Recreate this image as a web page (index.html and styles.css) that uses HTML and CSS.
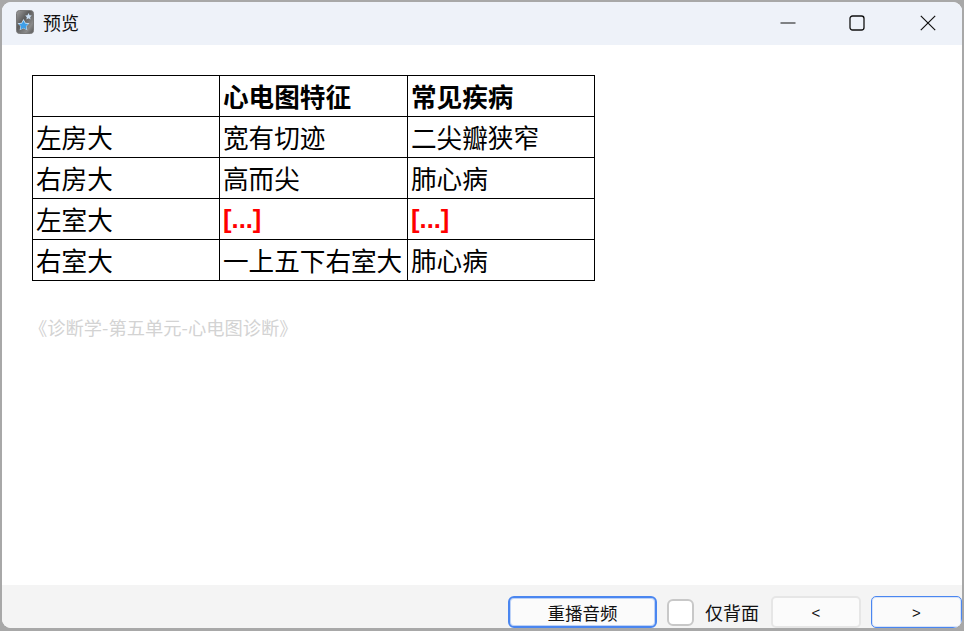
FILE: index.html
```html
<!DOCTYPE html>
<html lang="zh-CN">
<head>
<meta charset="utf-8">
<title>预览</title>
<link rel="stylesheet" href="styles.css">
</head>
<body>
<div class="window">
  <header class="titlebar">
    <svg class="app-icon" width="18" height="24" viewBox="0 0 18 24">
      <defs>
        <linearGradient id="g" x1="0" y1="0" x2="1" y2="1">
          <stop offset="0" stop-color="#a0a0a0"/>
          <stop offset="0.4" stop-color="#5c5c5c"/>
          <stop offset="0.75" stop-color="#8a8a8a"/>
          <stop offset="1" stop-color="#555"/>
        </linearGradient>
      </defs>
      <rect x="0.5" y="0.5" width="17" height="23" rx="3" fill="url(#g)" stroke="#7a7a7a"/>
      <path d="M12.500 3l1 2.300 2.300.3-1.700 1.600.5 2.300-2.100-1.200-2.100 1.200.5-2.300-1.700-1.600 2.300-.3z" fill="#c9def2"/>
      <path d="M7.500 9l2 3.700 4 .6-3 2.900.8 4-3.800-2-3.800 2 .8-4-3-2.900 4-.6z" fill="#cfe4f6"/>
      <path d="M7.500 10.500l1.600 3 3.200.5-2.300 2.300.5 3.200-3-1.600-3 1.600.5-3.200-2.300-2.300 3.200-.5z" fill="#3f9fe8"/>
    </svg>
    <span class="title">预览</span>
    <div class="controls">
      <svg class="min" width="16" height="16" viewBox="0 0 16 16"><path d="M0.500 8h15" stroke="#111" stroke-width="1.100" fill="none"/></svg>
      <svg width="16" height="16" viewBox="0 0 16 16"><rect x="1" y="1" width="14" height="14" rx="2.500" stroke="#111" stroke-width="1.300" fill="none"/></svg>
      <svg width="16" height="16" viewBox="0 0 16 16"><path d="M0.800 0.800l14.400 14.400M15.200 0.800L0.800 15.200" stroke="#111" stroke-width="1.200" fill="none"/></svg>
    </div>
  </header>
  <main class="content">
    <table class="grid">
      <colgroup><col class="c1"><col class="c2"><col class="c3"></colgroup>
      <tr><td></td><td class="head">心电图特征</td><td class="head">常见疾病</td></tr>
      <tr><td>左房大</td><td>宽有切迹</td><td>二尖瓣狭窄</td></tr>
      <tr><td>右房大</td><td>高而尖</td><td>肺心病</td></tr>
      <tr><td>左室大</td><td class="cloze">[...]</td><td class="cloze">[...]</td></tr>
      <tr><td>右室大</td><td>一上五下右室大</td><td>肺心病</td></tr>
    </table>
    <p class="source">《诊断学-第五单元-心电图诊断》</p>
  </main>
  <footer class="bottombar">
    <button class="btn replay">重播音频</button>
    <span class="check"></span>
    <span class="label">仅背面</span>
    <button class="btn nav">&lt;</button>
    <button class="btn nav active">&gt;</button>
  </footer>
</div>
</body>
</html>
```
FILE: styles.css
```css
* { box-sizing: border-box; }
html, body { margin: 0; height: 100%; }
body {
  background: #a8a8a8;
  padding: 2px 2px 3px 2px;
  font-family: "Noto Sans CJK SC", "Liberation Sans", sans-serif;
  overflow: hidden;
}
.window {
  height: 626px;
  border-radius: 9px;
  overflow: hidden;
  background: #fff;
  display: flex;
  flex-direction: column;
}
.titlebar {
  height: 43px;
  flex: none;
  background: #eef2f9;
  display: flex;
  align-items: center;
  padding: 0 0 2px 14px;
  color: #111;
}
.app-icon { flex: none; margin-bottom: 1px; }
.title { font-size: 18px; margin: 0 0 2px 9px; line-height: 1; }
.controls {
  margin-left: auto;
  display: flex;
  align-items: center;
  gap: 55px;
  padding-right: 26px;
}
.min { margin-right: -2px; }
.content { flex: 1; padding: 30px 30px 0; }
.grid {
  border-collapse: collapse;
  table-layout: fixed;
  width: 562px;
  font-size: 25.600px;
  color: #000;
}
.c1 { width: 187px; }
.c2 { width: 188px; }
.c3 { width: 187px; }
.grid td {
  border: 1px solid #000;
  height: 41px;
  padding: 0 0 1px 3px;
  line-height: 38px;
  white-space: nowrap;
  overflow: hidden;
}
.grid .head { font-weight: 700; }
.grid .cloze {
  font-weight: 700;
  color: #f00;
  font-family: "Liberation Sans", "Noto Sans CJK SC", sans-serif;
}
.source {
  margin: 34px 0 0 -3px;
  font-size: 18.300px;
  line-height: 25px;
  color: #d3d3d3;
}
.bottombar {
  height: 43px;
  flex: none;
  background: #f4f4f4;
  display: flex;
  align-items: center;
  padding-left: 506px;
  padding-top: 11px;
  color: #111;
}
.btn {
  font-family: inherit;
  color: #111;
  background: #fbfbfb;
  border: 2px solid #e6e6e6;
  border-radius: 5px;
  padding: 0;
  height: 32px;
}
.replay {
  width: 149px;
  font-size: 17.500px;
  border: 2px solid #4a86f0;
  border-radius: 6px;
  box-shadow: inset 0 0 0 1px rgba(74, 134, 240, 0.35);
}
.check {
  width: 27px;
  height: 27px;
  margin-left: 10px;
  background: #fff;
  border: 2px solid #c8c8c8;
  border-radius: 6px;
}
.label { font-size: 18px; margin-left: 11px; margin-right: 2px; line-height: 1; }
.nav { width: 90px; font-size: 15px; font-family: "Liberation Sans", sans-serif; margin-left: 10px; }
.active { border: 1px solid #4a86f0; box-shadow: inset 0 0 0 1px rgba(74, 134, 240, 0.2); width: 91px; }
```
